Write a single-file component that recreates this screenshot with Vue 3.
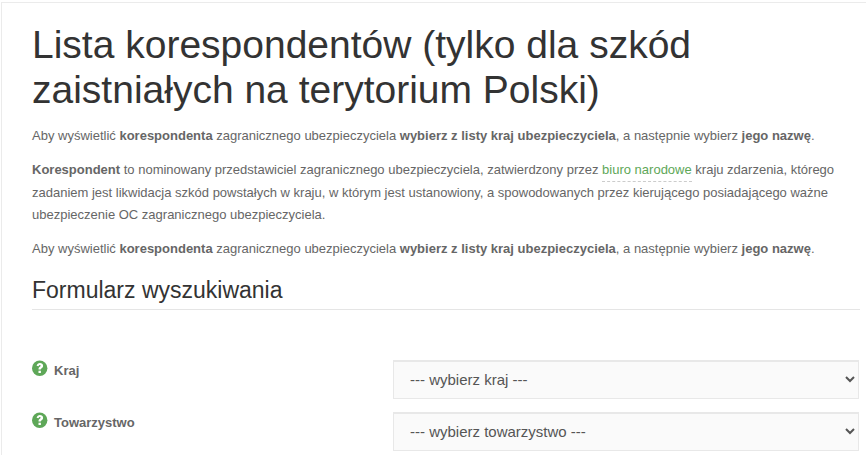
<script setup>
import { ref } from 'vue'

const fields = [
  { id: 'country', label: 'Kraj', placeholder: '--- wybierz kraj ---' },
  { id: 'company', label: 'Towarzystwo', placeholder: '--- wybierz towarzystwo ---' },
]
const values = ref({ country: '', company: '' })
</script>

<template>
  <main class="card">
    <h1>Lista korespondentów (tylko dla szkód zaistniałych na terytorium Polski)</h1>
    <p>
      Aby wyświetlić <strong>korespondenta</strong> zagranicznego ubezpieczyciela
      <strong>wybierz z listy kraj ubezpieczyciela</strong>, a następnie wybierz <strong>jego nazwę</strong>.
    </p>
    <p>
      <strong>Korespondent</strong> to nominowany przedstawiciel zagranicznego ubezpieczyciela, zatwierdzony przez
      <a href="#biuro-narodowe">biuro narodowe</a> kraju zdarzenia, którego zadaniem jest likwidacja szkód powstałych w
      kraju, w którym jest ustanowiony, a spowodowanych przez kierującego posiadającego ważne ubezpieczenie OC
      zagranicznego ubezpieczyciela.
    </p>
    <p>
      Aby wyświetlić <strong>korespondenta</strong> zagranicznego ubezpieczyciela
      <strong>wybierz z listy kraj ubezpieczyciela</strong>, a następnie wybierz <strong>jego nazwę</strong>.
    </p>
    <form @submit.prevent>
      <h2>Formularz wyszukiwania</h2>
      <div v-for="field in fields" :key="field.id" class="row">
        <label :for="field.id">
          <svg class="help" viewBox="0 0 16 16" aria-hidden="true">
            <circle cx="7.700" cy="8.300" r="7.700" fill="#5ea758" />
            <path d="M4.600 5.800C5.200 4 6.300 3.100 7.900 3.100c1.800 0 3.200 1.100 3.200 2.700 0 1.500-.9 2.100-1.700 2.600-.5.300-.6.500-.6 1.200H6.500c0-1.600.4-2.200 1.300-2.800.6-.4.900-.6.9-1 0-.5-.4-.8-.9-.8-.6 0-.9.400-1.300 1.200z" fill="#fff" />
            <rect x="6.500" y="10.700" width="2.400" height="2.300" fill="#fff" />
          </svg>
          <span>{{ field.label }}</span>
        </label>
        <select :id="field.id" v-model="values[field.id]">
          <option value="">{{ field.placeholder }}</option>
        </select>
      </div>
    </form>
  </main>
</template>

<style>
body {
  margin: 0;
  background: #fff;
}
</style>

<style scoped>
.card {
  box-sizing: border-box;
  min-height: calc(100vh - 2px);
  margin: 2px 0 0 1px;
  padding: 19px 6px 3px 30px;
  border-top: 1px solid #ebebeb;
  border-left: 1px solid #ebebeb;
  color: #666;
  font: 13px/22px "Liberation Sans", Arial, sans-serif;
}

h1 {
  margin: 0 0 13px;
  color: #333;
  font-size: 39px;
  font-weight: 400;
  line-height: 45px;
}

p {
  margin: 0 0 12px;
}

a {
  display: inline-block;
  border-bottom: 1px dashed #ccc;
  color: #5ea758;
  text-decoration: none;
}

h2 {
  margin: 0 0 50px;
  padding-bottom: 1px;
  border-bottom: 1px solid #e5e5e5;
  color: #333;
  font-size: 23px;
  font-weight: 400;
  line-height: 36px;
}

.row {
  display: grid;
  grid-template-columns: 361px 1fr;
  margin: 0 1px 13px 0;
}

.row:last-child {
  margin-bottom: 0;
}

label {
  display: flex;
  align-items: flex-start;
  gap: 6px;
  font-weight: 700;
}

.help {
  width: 16px;
  height: 16px;
}

select {
  width: 100%;
  height: 39px;
  padding: 0 0 2px 12px;
  border: 1px solid #e8e8e8;
  border-top-width: 2px;
  border-radius: 0;
  background-color: #fafafa;
  color: #555;
  font: 15px "Liberation Sans", Arial, sans-serif;
}
</style>
